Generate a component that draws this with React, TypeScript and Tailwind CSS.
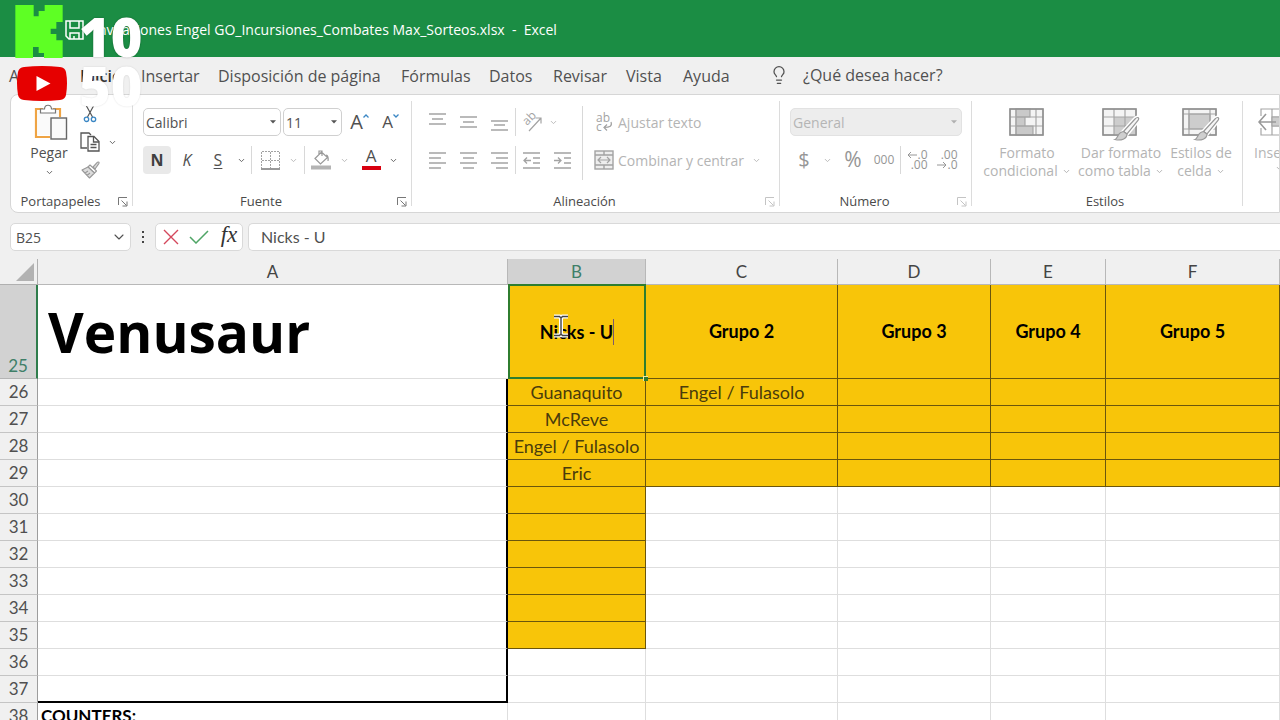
import React from "react";
import { ChevronDown, Lightbulb } from "lucide-react";

type Kids = { children?: React.ReactNode };

const gray = "#a3a3a3";

function Chevron({ className = "text-[#666]" }: { className?: string }) {
  return <ChevronDown size={9} strokeWidth={2.6} className={className} aria-hidden />;
}

function DropButton({ label, className, tone }: { label: string; className: string; tone?: string }) {
  return (
    <button aria-label={label} className={`flex h-7 items-center justify-center ${className}`}>
      <Chevron className={tone} />
    </button>
  );
}

function IconButton({ label, className = "w-[31px]", children }: Kids & { label: string; className?: string }) {
  return (
    <button aria-label={label} className={`flex h-7 shrink-0 items-center justify-center ${className}`}>
      {children}
    </button>
  );
}

function Rule({ className = "mx-0.5" }: { className?: string }) {
  return <div className={`h-7 w-px shrink-0 bg-[#d8d8d8] ${className}`} />;
}

function Launcher({ name, tone }: { name: string; tone: string }) {
  return (
    <button aria-label={`Opciones de ${name}`} className={`ml-2 ${tone}`}>
      <svg width="10" height="10" viewBox="0 0 10 10" fill="none" stroke="currentColor">
        <path d="M.5 8V.5H9M3.5 3.5l5 5M9 4.500V9H4.500" />
      </svg>
    </button>
  );
}

function Group({
  name,
  width,
  launcher,
  children,
}: Kids & { name: string; width: string; launcher?: string }) {
  return (
    <>
      <section aria-label={name} className={`flex shrink-0 flex-col ${width}`}>
        <div className="flex flex-1 px-[10px] pt-[13px]">{children}</div>
        <div className="flex h-5 items-center pr-1">
          <span className="flex-1 text-center text-[13px] text-[#4a4a4a]">{name}</span>
          {launcher ? <Launcher name={name} tone={launcher} /> : null}
        </div>
      </section>
      <div className="my-1.5 w-px shrink-0 bg-[#dcdcdc]" />
    </>
  );
}

function Combo({
  label,
  value,
  className,
  disabled = false,
}: {
  label: string;
  value: string;
  className: string;
  disabled?: boolean;
}) {
  return (
    <div className={`relative ${className}`}>
      <select
        aria-label={label}
        disabled={disabled}
        className={`h-7 w-full appearance-none rounded-[5px] border pl-0.5 text-[14px] opacity-100 ${
          disabled ? "border-[#e2e2e2] bg-[#ededed] text-[#b5b5b5]" : "border-[#d0d0d0] bg-white text-[#505050]"
        }`}
      >
        <option>{value}</option>
      </select>
      <svg
        width="6"
        height="4"
        viewBox="0 0 6 4"
        className={`pointer-events-none absolute top-3 right-[5px] ${disabled ? "text-[#b0b0b0]" : "text-[#555]"}`}
      >
        <path d="M0 .3h6L3 3.500z" fill="currentColor" />
      </svg>
    </div>
  );
}

function Lines({ rows }: { rows: [number, number, number][] }) {
  return (
    <svg width="18" height="18" viewBox="0 0 18 18" stroke={gray} strokeWidth="1.4">
      {rows.map(([y, from, to]) => (
        <path key={y} d={`M${from} ${y}H${to}`} />
      ))}
    </svg>
  );
}

function Clipboard() {
  return (
    <svg width="34" height="38" viewBox="0 0 34 38" fill="none">
      <path d="M9 5H2v28h14M19 5h7v8" stroke="#efa444" strokeWidth="2.2" />
      <path d="M3.500 6.500h21V13H16v18H3.500z" fill="#fafafa" />
      <path d="M6.500 9V5h4c.3-5 6.700-5 7 0h4v4z" fill="#fff" stroke="#777" strokeWidth="1.200" />
      <rect x="17" y="14" width="15.500" height="21" fill="#fafafa" stroke="#666" strokeWidth="1.400" />
    </svg>
  );
}

function Scissors() {
  return (
    <svg width="14" height="18" viewBox="0 0 14 18" fill="none">
      <path d="M3.500 1l6 11M10.500 1l-6 11" stroke="#555" strokeWidth="1.200" />
      <circle cx="3.500" cy="14.300" r="2.200" stroke="#3b87c4" strokeWidth="1.300" />
      <circle cx="10.500" cy="14.300" r="2.200" stroke="#3b87c4" strokeWidth="1.300" />
    </svg>
  );
}

function CopyIcon() {
  return (
    <svg width="20" height="20" viewBox="0 0 20 20" fill="none" stroke="#555" strokeWidth="1.300">
      <path d="M7 16H1V1h8l2 2" />
      <path d="M8 4.500h6l5 5V19H8z" fill="#fff" />
      <path d="M13.500 5v5H19M10.500 12.500h6M10.500 15.500h6" />
    </svg>
  );
}

function FormatPainter() {
  return (
    <svg width="19" height="18" viewBox="0 0 19 18" fill="#dcdcdc" stroke="#999" strokeWidth="1.100" strokeLinejoin="round">
      <path d="M12 6l4.500-4.800c1.200-.7 2 .3 1.300 1.400L14 8z" />
      <path d="M9 4l6.500 6-2 2L7 6z" fill="#fff" />
      <path d="M7 6L1 9l7.500 8 5-5zM4 12l3-2M6 14.500l3-2.500" />
    </svg>
  );
}

function Brush() {
  return (
    <>
      <path d="M35.500 9.500c1.500 0 1.500 1.500.5 3L25 26l-3.500-2.500L33 11c.8-.8 1.500-1.500 2.500-1.500z" fill="#f6f6f6" stroke="#fff" strokeWidth="4" />
      <path d="M35.500 9.500c1.500 0 1.500 1.500.5 3L25 26l-3.500-2.500L33 11c.8-.8 1.500-1.500 2.500-1.500z" fill="#f6f6f6" stroke="#999" />
      <path d="M21.500 23.500L25 26c0 5-6 7-12 5.500 3-1 2.500-7.500 8.500-8z" fill="#cfcfcf" stroke="#999" />
    </>
  );
}

function ConditionalIcon() {
  return (
    <svg width="36" height="34" viewBox="0 0 36 34" fill="none" stroke="#a6a6a6" strokeWidth="1.200">
      <rect x="1" y="1" width="33" height="26" fill="#f4f4f4" />
      <path d="M7 1h14v8H7zM7 9h9v9H7zM7 18h17v9H7z" fill="#c9c9c9" />
      <path d="M1 9h33M1 18h33M7 1v26M27 1v26" />
      <rect x="1" y="1" width="33" height="26" stroke="#8f8f8f" strokeWidth="1.500" />
    </svg>
  );
}

function TableIcon() {
  return (
    <svg width="38" height="34" viewBox="0 0 38 34" fill="none" stroke="#a6a6a6" strokeWidth="1.200">
      <rect x="1" y="1" width="33" height="26" fill="#f4f4f4" />
      <path d="M12 9h22v18H12z" fill="#cdcdcd" stroke="none" />
      <path d="M1 9h33M1 18h33M12 1v26M23 1v26" />
      <rect x="1" y="1" width="33" height="26" stroke="#8f8f8f" strokeWidth="1.500" />
      <Brush />
    </svg>
  );
}

function CellStyleIcon() {
  return (
    <svg width="38" height="34" viewBox="0 0 38 34" fill="none" stroke="#a6a6a6" strokeWidth="1.200">
      <rect x="1" y="1" width="33" height="26" fill="#f4f4f4" />
      <path d="M7 6h21v15H7z" fill="#cdcdcd" />
      <path d="M7 1v26M28 1v26M1 6h33M1 21h33" />
      <rect x="1" y="1" width="33" height="26" stroke="#8f8f8f" strokeWidth="1.500" />
      <Brush />
    </svg>
  );
}

function InsertIcon() {
  return (
    <svg width="36" height="34" viewBox="0 0 36 34" fill="none" stroke="#a6a6a6" strokeWidth="1.200">
      <path d="M3 8V1h31v26H3v-7M14 1v26M24 1v26M14 9h20M14 18h20" />
      <path d="M14 9h20v9H14z" fill="#cdcdcd" />
      <path d="M18 14H1M8 6l-7 8 7 8" stroke="#999" strokeWidth="1.600" />
    </svg>
  );
}

function StyleButton({
  icon,
  first,
  second,
  className,
}: {
  icon: React.ReactNode;
  first: string;
  second: string;
  className: string;
}) {
  return (
    <button className={`flex shrink-0 flex-col items-center text-[14px] leading-[18px] text-[#b4b4b4] ${className}`}>
      {icon}
      <span className="mt-0.5 whitespace-nowrap">{first}</span>
      <span className="flex items-center gap-1 whitespace-nowrap">
        {second}
        <Chevron className="text-[#b4b4b4]" />
      </span>
    </button>
  );
}

function Decimals({ top, bottom, arrow }: { top: string; bottom: string; arrow: "left" | "right" }) {
  return (
    <span className="flex flex-col items-end text-[12px] leading-[10px] text-[#969696]">
      <span className="flex items-center">
        {arrow === "left" ? (
          <svg width="10" height="8" viewBox="0 0 10 8" fill="none" stroke="currentColor">
            <path d="M10 4H1M4 1L1 4l3 3" />
          </svg>
        ) : null}
        {top}
      </span>
      <span className="flex items-center">
        {arrow === "right" ? (
          <svg width="10" height="8" viewBox="0 0 10 8" fill="none" stroke="currentColor">
            <path d="M0 4h9M6 1l3 3-3 3" />
          </svg>
        ) : null}
        {bottom}
      </span>
    </span>
  );
}

const tabs: [string, string][] = [
  ["Archivo", "w-[49px]"],
  ["Inicio", "w-[39px]"],
  ["Insertar", "w-[55px]"],
  ["Disposición de página", "w-[161px]"],
  ["Fórmulas", "w-[66px]"],
  ["Datos", "w-[42px]"],
  ["Revisar", "w-[51px]"],
  ["Vista", "w-[35px]"],
  ["Ayuda", "w-[46px]"],
];

function Ribbon() {
  return (
    <div className="ml-[10px] flex h-[119px] overflow-hidden rounded-l-lg border border-[#d6d6d6] bg-white">
      <Group name="Portapapeles" width="w-[121px]" launcher="text-[#777]">
        <button className="-mt-1 flex w-[56px] flex-col items-center text-[14px] leading-[22px] text-[#505050]">
          <span className="pl-1"><Clipboard /></span>
          Pegar
          <span className="mt-1"><Chevron /></span>
        </button>
        <div className="-mt-2 flex flex-col">
          <IconButton label="Cortar" className="w-[26px]"><Scissors /></IconButton>
          <div className="flex">
            <IconButton label="Copiar" className="w-[26px]"><CopyIcon /></IconButton>
            <DropButton label="Más opciones de copiar" className="w-[18px]" />
          </div>
          <IconButton label="Copiar formato" className="w-[26px]"><FormatPainter /></IconButton>
        </div>
      </Group>

      <Group name="Fuente" width="w-[278px]" launcher="text-[#777]">
        <div className="flex flex-col gap-[10px]">
          <div className="flex">
            <Combo label="Fuente" value="Calibri" className="w-[138px]" />
            <Combo label="Tamaño de fuente" value="11" className="ml-0.5 w-[59px]" />
            <IconButton label="Aumentar tamaño de fuente" className="ml-0.5 w-[31px]">
              <span className="text-[20px] text-[#505050]">A</span>
              <svg width="6" height="4" viewBox="0 0 6 4" className="mb-3" fill="none" stroke="#3b87c4" strokeWidth="1.300">
                <path d="M.5 3.500L3 1l2.500 2.500" />
              </svg>
            </IconButton>
            <IconButton label="Disminuir tamaño de fuente">
              <span className="text-[17px] text-[#505050]">A</span>
              <svg width="6" height="4" viewBox="0 0 6 4" className="mb-3" fill="none" stroke="#3b87c4" strokeWidth="1.300">
                <path d="M.5.500L3 3 5.500.500" />
              </svg>
            </IconButton>
          </div>
          <div className="flex">
            <button aria-label="Negrita" className="h-7 w-7 rounded bg-[#e9e9e9] text-[16px] font-bold text-[#3f3f3f]">N</button>
            <button aria-label="Cursiva" className="h-7 w-8 text-[16px] text-[#505050] italic">K</button>
            <button aria-label="Subrayado" className="h-7 w-[30px] text-[16px] text-[#505050] underline underline-offset-2">S</button>
            <DropButton label="Tipos de subrayado" className="w-4" />
            <Rule />
            <IconButton label="Bordes" className="ml-0.5 w-7">
              <svg width="19" height="19" viewBox="0 0 19 19" fill="none" stroke={gray}>
                <path d="M1 .5h17M.5 1v17M18.500 1v17M9.500 1v17M1 9.500h17" strokeDasharray="2 1" />
                <path d="M0 18h19" stroke="#999" strokeWidth="2" />
              </svg>
            </IconButton>
            <DropButton label="Más bordes" className="w-[18px]" tone="text-[#bbb]" />
            <Rule />
            <IconButton label="Color de relleno" className="w-7">
              <svg width="20" height="20" viewBox="0 0 20 20" fill="none" stroke="#999">
                <path d="M4 8.500L10.500 2l6 5.500-7 6.500zM8 4.500V1h3v5M15 5c2 0 2.500 3 2 6" strokeWidth="1.200" />
                <path d="M0 17.500h20" stroke="#b4b4b4" strokeWidth="4" />
              </svg>
            </IconButton>
            <DropButton label="Más colores de relleno" className="w-[18px]" tone="text-[#bbb]" />
            <button aria-label="Color de fuente" className="ml-1 flex h-7 w-7 flex-col items-center text-[17px] leading-5 text-[#505050]">
              A
              <span className="h-1 w-[19px] bg-[#d8000f]" />
            </button>
            <DropButton label="Más colores de fuente" className="w-4" />
          </div>
        </div>
      </Group>

      <Group name="Alineación" width="w-[367px]" launcher="text-[#c4c4c4]">
        <div className="flex w-[156px] flex-col gap-[10px]">
          <div className="flex">
            <IconButton label="Alinear arriba"><Lines rows={[[1, 0, 17], [6, 3, 14], [11, 0, 17]]} /></IconButton>
            <IconButton label="Alinear al medio"><Lines rows={[[4, 0, 17], [9, 3, 14], [14, 0, 17]]} /></IconButton>
            <IconButton label="Alinear abajo"><Lines rows={[[8, 0, 17], [12, 3, 14], [17, 0, 17]]} /></IconButton>
            <Rule className="" />
            <IconButton label="Orientación" className="w-[31px]">
              <svg width="24" height="24" viewBox="0 0 24 24" fill="none" stroke={gray} strokeWidth="1.200">
                <path d="M9 21L21 8M15.500 8H21v5.500" />
                <text x="0" y="0" transform="translate(7 16) rotate(-45)" fontSize="12" fill={gray} stroke="none">ab</text>
              </svg>
            </IconButton>
            <DropButton label="Más orientaciones" className="w-3" tone="text-[#bbb]" />
          </div>
          <div className="flex">
            <IconButton label="Alinear a la izquierda"><Lines rows={[[2, 0, 17], [7, 0, 12], [12, 0, 17], [17, 0, 12]]} /></IconButton>
            <IconButton label="Centrar"><Lines rows={[[2, 0, 17], [7, 3, 14], [12, 0, 17], [17, 3, 14]]} /></IconButton>
            <IconButton label="Alinear a la derecha"><Lines rows={[[2, 0, 17], [7, 5, 17], [12, 0, 17], [17, 5, 17]]} /></IconButton>
            <Rule className="" />
            <IconButton label="Disminuir sangría">
              <svg width="18" height="18" viewBox="0 0 18 18" fill="none" stroke={gray} strokeWidth="1.300">
                <path d="M0 2h17M10 7h7M10 12h7M0 17h17M8 9.500H1M4 6.500l-3 3 3 3" />
              </svg>
            </IconButton>
            <IconButton label="Aumentar sangría">
              <svg width="18" height="18" viewBox="0 0 18 18" fill="none" stroke={gray} strokeWidth="1.300">
                <path d="M0 2h17M10 7h7M10 12h7M0 17h17M0 9.500h7M4 6.500l3 3-3 3" />
              </svg>
            </IconButton>
          </div>
        </div>
        <div className="ml-1 -mt-0.5 h-[74px] w-px bg-[#d8d8d8]" />
        <div className="ml-[11px] flex flex-col gap-[10px] text-[14px] text-[#b4b4b4]">
          <button className="flex h-7 items-center gap-1 whitespace-nowrap">
            <svg width="20" height="24" viewBox="0 0 20 24" fill="none" aria-hidden>
              <text x="2" y="12" fontSize="12" fill={gray}>ab</text>
              <text x="2" y="21" fontSize="12" fill={gray}>c</text>
              <path d="M17 12c1.500 4-1 5.500-7 5.500M13 14.500l-3 3 3 3" stroke={gray} strokeWidth="1.200" />
            </svg>
            Ajustar texto
          </button>
          <div className="flex">
            <button className="flex h-7 items-center gap-1 whitespace-nowrap">
              <svg width="20" height="20" viewBox="0 0 20 20" fill="none" stroke={gray} strokeWidth="1.400">
                <rect x="1" y="1" width="18" height="18" fill="#eee" />
                <path d="M1 5h18M1 15h18M10 1v4M10 15v4" />
                <path d="M4 10h12M7 7l-3 3 3 3M13 7l3 3-3 3" strokeWidth="1.200" />
              </svg>
              <span className="w-[126px] text-left">Combinar y centrar</span>
            </button>
            <DropButton label="Más opciones de combinar" className="ml-1 w-4" tone="text-[#bbb]" />
          </div>
        </div>
      </Group>

      <Group name="Número" width="w-[191px]" launcher="text-[#c4c4c4]">
        <div className="flex flex-col gap-[10px]">
          <Combo label="Formato de número" value="General" className="w-[172px]" disabled />
          <div className="flex text-[#969696]">
            <IconButton label="Formato de contabilidad" className="w-7"><span className="text-[20px]">$</span></IconButton>
            <DropButton label="Más monedas" className="w-[18px]" tone="text-[#bbb]" />
            <IconButton label="Estilo porcentual" className="w-[34px]"><span className="text-[21px]">%</span></IconButton>
            <IconButton label="Estilo millares" className="w-7"><span className="text-[12px]">000</span></IconButton>
            <Rule />
            <IconButton label="Aumentar decimales" className="w-[29px]"><Decimals top=".0" bottom=".00" arrow="left" /></IconButton>
            <IconButton label="Disminuir decimales"><Decimals top=".00" bottom=".0" arrow="right" /></IconButton>
          </div>
        </div>
      </Group>

      <Group name="Estilos" width="w-[270px]">
        <StyleButton icon={<ConditionalIcon />} first="Formato" second="condicional" className="w-[90px]" />
        <StyleButton icon={<TableIcon />} first="Dar formato" second="como tabla" className="w-[98px]" />
        <StyleButton icon={<CellStyleIcon />} first="Estilos de" second="celda" className="w-[62px]" />
      </Group>

      <div className="pt-[13px] pl-[11px]">
        <button className="flex flex-col gap-0.5 text-[14px] leading-[18px] text-[#b4b4b4]">
          <span className="pl-1"><InsertIcon /></span>
          Insertar
          <span className="flex w-full justify-center"><Chevron className="text-[#b4b4b4]" /></span>
        </button>
      </div>
    </div>
  );
}

function FormulaBar() {
  return (
    <div className="flex h-[46px] items-start pt-[10px] pl-[10px] text-[#505050]">
      <div className="relative w-[121px]">
        <input
          aria-label="Cuadro de nombres"
          defaultValue="B25"
          className="h-7 w-full rounded-[5px] border border-[#d9d9d9] bg-white pl-[5px] text-[14px]"
        />
        <ChevronDown size={16} strokeWidth={1.6} className="absolute top-[6px] right-1" aria-hidden />
      </div>
      <div className="flex h-7 w-6 flex-col items-center justify-center gap-[3px]">
        <span className="size-0.5 bg-[#444]" />
        <span className="size-0.5 bg-[#444]" />
        <span className="size-0.5 bg-[#444]" />
      </div>
      <div className="flex h-7 w-[88px] items-center justify-between rounded-[5px] border border-[#d9d9d9] bg-white pr-[3px] pl-[7px]">
        <button aria-label="Cancelar">
          <svg width="16" height="16" viewBox="0 0 16 16" stroke="#d4485c" strokeWidth="1.400">
            <path d="M1 1l14 14M15 1L1 15" />
          </svg>
        </button>
        <button aria-label="Introducir">
          <svg width="20" height="14" viewBox="0 0 20 14" fill="none" stroke="#4fa566" strokeWidth="1.500">
            <path d="M1 7l6 6L19 1" />
          </svg>
        </button>
        <button aria-label="Insertar función" className="w-[20px] pb-1 font-['Liberation_Serif',serif] text-[23px] leading-6 text-[#333] italic">
          fx
        </button>
      </div>
      <input
        aria-label="Barra de fórmulas"
        defaultValue="Nicks - U"
        className="ml-[5px] h-7 min-w-0 flex-1 rounded-l-[5px] border border-r-0 border-[#d9d9d9] bg-white pb-0.5 pl-3 font-['Lato',sans-serif] text-[16px]"
      />
    </div>
  );
}

const groups = ["Grupo 2", "Grupo 3", "Grupo 4", "Grupo 5"];
const names = ["Guanaquito", "McReve", "Engel / Fulasolo", "Eric"];
const bodyRows = [26, 27, 28, 29, 30, 31, 32, 33, 34, 35, 36, 37];

const filled = "border-r border-b border-[#6b560c] bg-[#f8c509]";
const plain = "border-r border-b border-[#dedede] bg-white";
const rowHead =
  "border-r border-b border-[#c4c4c4] border-r-[#9d9d9d] bg-[#f0f0f0] p-0 text-center text-[17px] font-normal text-[#505050]";

function Sheet() {
  return (
    <div className="min-h-0 flex-1 overflow-hidden">
      <table className="w-full table-fixed border-separate border-spacing-0 font-['Lato',sans-serif] text-[18px] text-[#4a3c0c]">
        <colgroup>
          <col className="w-[38px]" />
          <col className="w-[470px]" />
          <col className="w-[138px]" />
          <col className="w-[192px]" />
          <col className="w-[153px]" />
          <col className="w-[115px]" />
          <col />
        </colgroup>
        <thead>
          <tr className="h-[26px] text-[17px] leading-5 text-[#444]">
            <th aria-label="Seleccionar todo" className="border-r border-b border-[#b0b0b0] p-0">
              <svg width="18" height="18" viewBox="0 0 18 18" className="mr-[3px] ml-auto">
                <path d="M18 0v18H0z" fill="#b2b2b2" />
              </svg>
            </th>
            {["A", "B", "C", "D", "E", "F"].map((c) => (
              <th
                key={c}
                scope="col"
                className={`border-r border-b border-[#b8b8b8] p-0 font-normal ${
                  c === "B" ? "bg-[#d2d2d2] text-[#3f7f68]" : "bg-[#f0f0f0]"
                }`}
              >
                {c}
              </th>
            ))}
          </tr>
        </thead>
        <tbody>
          <tr className="h-[94px] text-black">
            <th
              scope="row"
              className="border-r-2 border-b border-r-[#2f7d4c] border-b-[#b4b4b4] bg-[#d2d2d2] p-0 text-center align-bottom text-[17px] leading-6 font-normal text-[#3f7f68]"
            >
              25
            </th>
            <td className="border-b border-[#dedede] bg-white p-0 pl-[10px] font-['Open_Sans',sans-serif] text-[55px] leading-none font-bold">
              Venusaur
            </td>
            <td className="relative bg-[#f8c509] p-0 text-center font-bold">
              <span className="border-r border-[#7c5b6a] py-0.5">Nicks - U</span>
              <span className="absolute -top-px right-0 bottom-0 left-0 border-2 border-[#2f7d2f]" />
              <span className="absolute -right-0.5 -bottom-0.5 size-[5px] border-t border-l border-[#f8e6a0] bg-[#2f7d2f]" />
              <svg width="16" height="24" viewBox="0 0 16 24" className="absolute top-[29px] left-[45px]" fill="none">
                <path d="M1 2.500h5.500L8 4l1.500-1.500H15M8 4v16M1 21.500h5.500L8 20l1.500 1.500H15" stroke="#fff" strokeWidth="4" />
                <path d="M1 2.500h5.500L8 4l1.500-1.500H15M8 4v16M1 21.500h5.500L8 20l1.500 1.500H15" stroke="#444" strokeWidth="1.400" />
              </svg>
            </td>
            {groups.map((g) => (
              <td key={g} className={`p-0 text-center font-bold ${filled}`}>{g}</td>
            ))}
          </tr>
          {bodyRows.map((n, i) => (
            <tr key={n} className="h-[27px] leading-5">
              <th scope="row" className={rowHead}>{n}</th>
              <td
                className={`border-r-2 border-r-black bg-white p-0 ${
                  n === 37 ? "border-b-2 border-b-black" : "border-b border-b-[#dedede]"
                }`}
              />
              <td className={`p-0 text-center whitespace-nowrap ${n <= 35 ? filled : plain}`}>{names[i]}</td>
              <td className={`p-0 text-center ${n <= 29 ? filled : plain}`}>{n === 26 ? "Engel / Fulasolo" : null}</td>
              <td className={`p-0 ${n <= 29 ? filled : plain}`} />
              <td className={`p-0 ${n <= 29 ? filled : plain}`} />
              <td className={`p-0 ${n <= 29 ? filled : plain}`} />
            </tr>
          ))}
          <tr className="h-[27px] leading-5">
            <th scope="row" className={rowHead}>38</th>
            <td className={`p-0 pl-[3px] text-[17px] font-bold text-black ${plain}`}>COUNTERS:</td>
            <td className={plain} />
            <td className={plain} />
            <td className={plain} />
            <td className={plain} />
            <td className={plain} />
          </tr>
        </tbody>
      </table>
    </div>
  );
}

function StreamOverlay() {
  return (
    <div className="pointer-events-none absolute top-[5px] left-[15px] grid grid-cols-[54px_auto] grid-rows-[53px_50px] items-center gap-x-2.5 font-['Noto_Sans',sans-serif] text-[54px] leading-[46px] font-black text-white">
      <svg width="48" height="53" viewBox="47 16 142 159">
        <path
          fill="#5eff24"
          d="M47 16h55v34h15V34h18V16h54v51h-19v20h-17v16h17v19h19v53h-56v-15h-16v-18h-17v33H47z"
        />
      </svg>
      <span className="pt-2 [text-shadow:0_0_2px_#00000055]">10</span>
      <svg width="50" height="35" viewBox="0 0 50 35" className="ml-0.5">
        <path fill="#e60000" d="M7 1Q25-1 43 1q5 .5 6 5 2 11 0 23-1 4.500-6 5-18 2-36 0-5-.5-6-5-2-12 0-23 1-4.500 6-5z" />
        <path fill="#fff" d="M19.500 10v15l14-7.500z" />
      </svg>
      <span className="pt-1 [text-shadow:0_0_2px_#00000022]">50</span>
    </div>
  );
}

export default function App() {
  return (
    <div className="relative flex h-screen flex-col overflow-hidden bg-[#f0f0f0] font-['Open_Sans','Noto_Sans',sans-serif]">
      <header className="flex h-[57px] shrink-0 items-center bg-[#1b8d44] pt-0.5 pl-[65px] text-[14px] text-white">
        <button aria-label="Guardar">
          <svg width="19" height="20" viewBox="0 0 19 20" fill="none" stroke="#fff" strokeWidth="1.500">
            <path d="M1 1h17v18H4l-3-3zM5 1v7h9V1M5 19v-6h9v6M9 16v3" />
          </svg>
        </button>
        <h1 className="ml-[10px] whitespace-pre">Invitaciones Engel GO_Incursiones_Combates Max_Sorteos.xlsx  -  Excel</h1>
      </header>
      <nav aria-label="Cinta de opciones" className="flex h-[37px] shrink-0 items-center gap-[22px] pl-[9px] text-[16px] text-[#505050]">
        {tabs.map(([t, w]) => (
          <button key={t} className={`shrink-0 text-left whitespace-nowrap ${w} ${t === "Inicio" ? "font-semibold text-[#333]" : ""}`}>
            {t}
          </button>
        ))}
        <button className="ml-[18px] flex items-center gap-[14px] pb-0.5 whitespace-nowrap">
          <Lightbulb size={20} strokeWidth={1.5} aria-hidden />
          ¿Qué desea hacer?
        </button>
      </nav>
      <Ribbon />
      <FormulaBar />
      <Sheet />
      <StreamOverlay />
    </div>
  );
}
